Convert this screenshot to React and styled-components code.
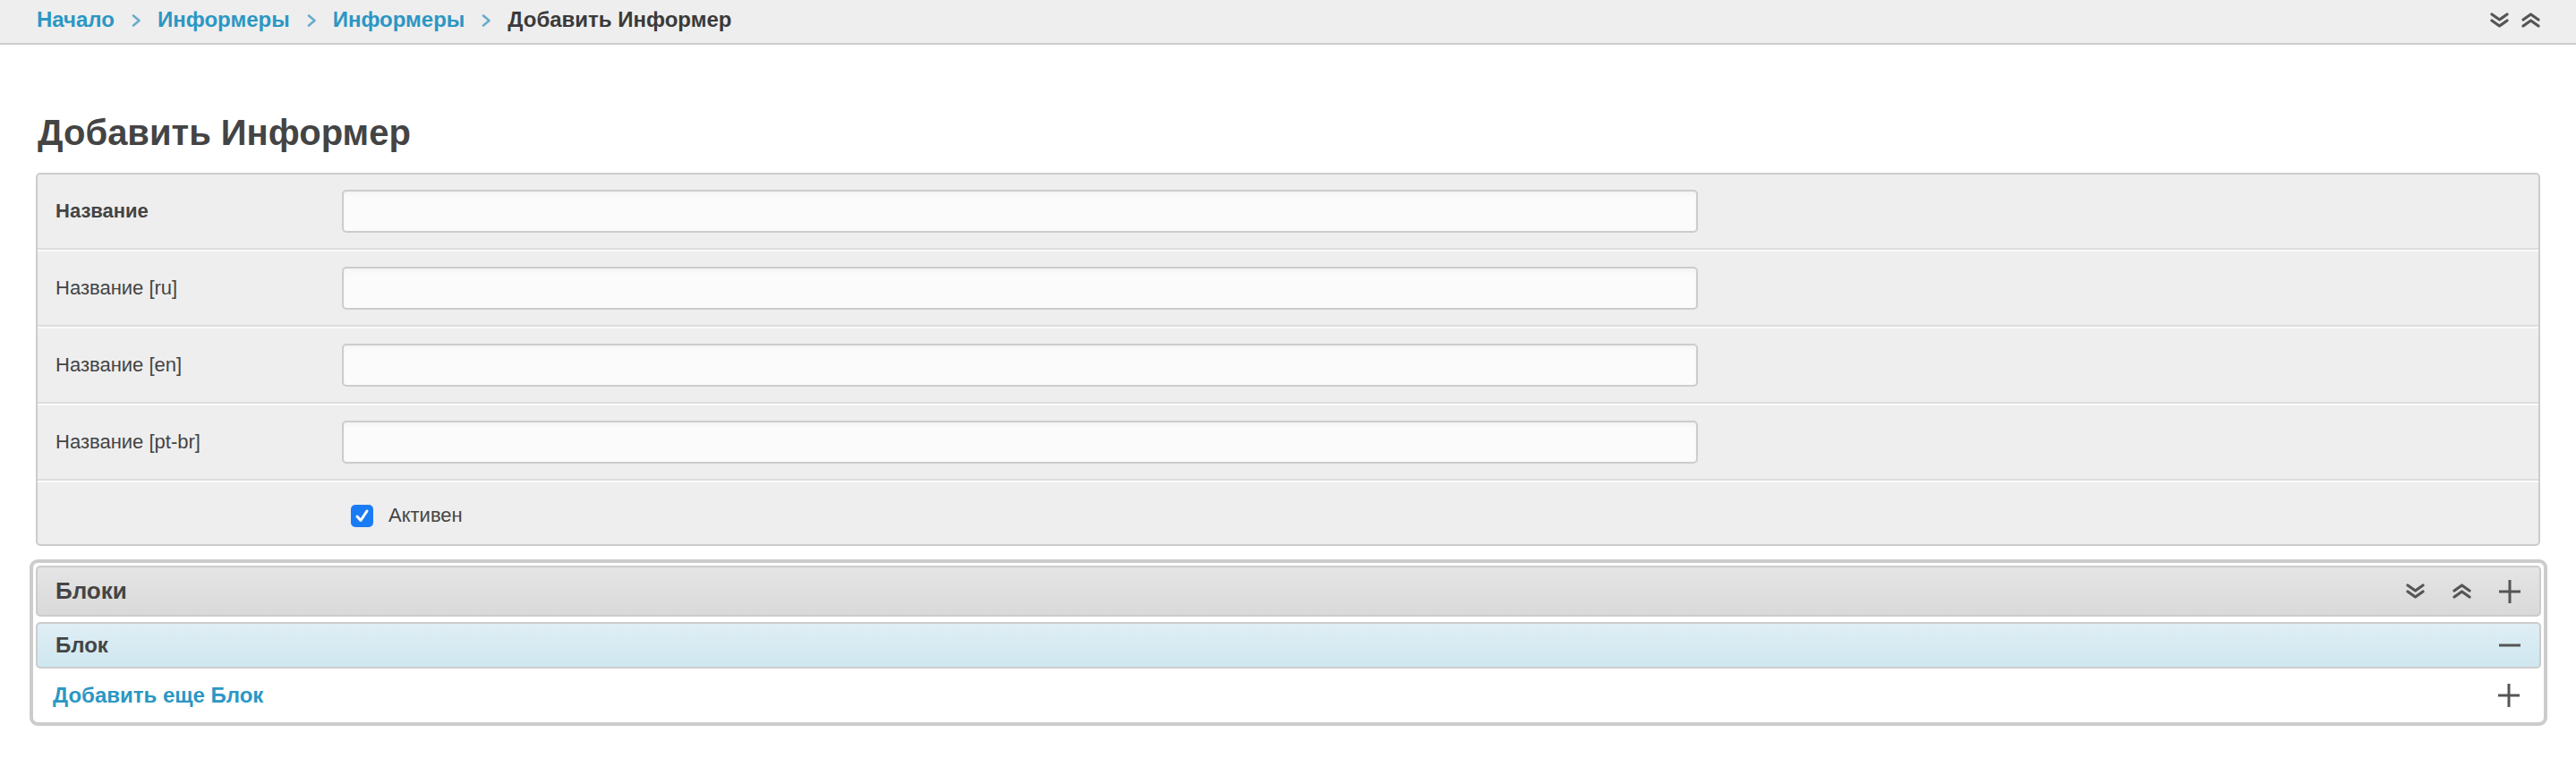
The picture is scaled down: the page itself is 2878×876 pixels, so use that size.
import React from "react";
import styled, { createGlobalStyle } from "styled-components";

const GlobalStyle = createGlobalStyle`
  body {
    margin: 0;
    background: #fff;
    font-family: "Liberation Sans", Arial, sans-serif;
    color: #444;
  }
  * { box-sizing: border-box; }
`;

const Breadcrumbs = styled.div`
  height: 50px;
  background: #eeeeee;
  border-bottom: 2px solid #cccccc;
  display: flex;
  align-items: center;
  padding: 0 40px 4px 41px;
  font-size: 24px;
  font-weight: bold;
`;

const Crumb = styled.a`
  color: ${({ current }) => (current ? "#3a3a3a" : "#2b97c4")};
  text-decoration: none;
`;

const Sep = styled.span`
  display: inline-flex;
  margin: 2px 18px 0 19px;
`;

const Tools = styled.div`
  margin-left: auto;
  display: flex;
  gap: 14px;
  margin-top: 0;
`;

const Content = styled.div`
  padding: 0 40px;
`;

const Title = styled.h1`
  margin: 74px 0 21px 2px;
  font-size: 40px;
  line-height: 48px;
  font-weight: bold;
  color: #444;
`;

const Panel = styled.div`
  background: #eeeeee;
  border: 2px solid #cccccc;
  border-radius: 5px;
  overflow: hidden;
`;

const Row = styled.div`
  display: flex;
  align-items: center;
  padding: ${({ last }) => (last ? "24px 20px 19px" : "17px 20px")};
  border-top: ${({ first }) => (first ? "none" : "2px solid #fafafa")};
  border-bottom: ${({ last }) => (last ? "none" : "2px solid #dddddd")};
`;

const Label = styled.label`
  width: 320px;
  flex-shrink: 0;
  font-size: 22px;
  font-weight: ${({ required }) => (required ? "bold" : "normal")};
  color: #444;
`;

const Input = styled.input`
  width: 1515px;
  height: 48px;
  border: 2px solid #cccccc;
  border-radius: 5px;
  background: #fbfbfb;
  box-shadow: inset 0 3px 4px rgba(0, 0, 0, 0.03);
  font-size: 22px;
  padding: 0 12px;
  font-family: inherit;
`;

const CheckWrap = styled.label`
  display: flex;
  align-items: center;
  gap: 17px;
  margin-left: 330px;
  font-size: 22px;
  color: #444;
`;

const CheckBox = styled.span`
  width: 25px;
  height: 25px;
  border-radius: 5px;
  background: #1a7cf5;
  display: inline-flex;
  align-items: center;
  justify-content: center;
`;

const Group = styled.div`
  margin: 15px -8px 0 -7px;
  border: 4px solid #cccccc;
  border-radius: 9px;
  padding: 3px;
`;

const GroupHeader = styled.div`
  height: 57px;
  display: flex;
  align-items: center;
  padding: 0 21px 0 20px;
  border: 2px solid #cccccc;
  border-radius: 5px;
  background: linear-gradient(#e5e5e5, #d9d9d9);
  font-size: 26px;
  font-weight: bold;
  color: #444;
  margin-bottom: 6px;
`;

const ItemHeader = styled(GroupHeader)`
  height: 52px;
  background: linear-gradient(#dfeef4, #cfe7f0);
  font-size: 24px;
  margin-bottom: 0;
`;

const AddRow = styled.div`
  height: 57px;
  display: flex;
  align-items: center;
  padding: 2px 24px 0 19px;
`;

const AddLink = styled.a`
  color: #2b97c4;
  font-weight: bold;
  font-size: 24px;
  text-decoration: none;
`;

const Actions = styled.div`
  margin-left: auto;
  display: flex;
  align-items: center;
  gap: 31px;
`;

const DoubleChevron = ({ up, w = 21, h = 17 }) => (
  <svg width={w} height={h} viewBox="0 0 21 17" fill="none" stroke="#555" strokeWidth="3.2" strokeLinecap="round" strokeLinejoin="round">
    {up ? (
      <>
        <polyline points="2,8 10.5,2 19,8" />
        <polyline points="2,15 10.5,9 19,15" />
      </>
    ) : (
      <>
        <polyline points="2,2 10.5,8 19,2" />
        <polyline points="2,9 10.5,15 19,9" />
      </>
    )}
  </svg>
);

const Plus = () => (
  <svg width="24" height="26" viewBox="0 0 24 26" stroke="#555" strokeWidth="3">
    <line x1="0" y1="13" x2="24" y2="13" />
    <line x1="12" y1="0" x2="12" y2="26" />
  </svg>
);

const Minus = () => (
  <svg width="24" height="26" viewBox="0 0 24 26" stroke="#555" strokeWidth="3">
    <line x1="0" y1="13" x2="24" y2="13" />
  </svg>
);

const Chevron = () => (
  <svg width="11" height="14" viewBox="0 0 11 14" fill="none" stroke="#6aaccb" strokeWidth="2.6" strokeLinecap="round" strokeLinejoin="round">
    <polyline points="2,1.5 8.5,7 2,12.5" />
  </svg>
);

const fields = [
  { label: "Название", required: true },
  { label: "Название [ru]" },
  { label: "Название [en]" },
  { label: "Название [pt-br]" },
];

const App = () => {
  return (
    <>
      <GlobalStyle />
      <Breadcrumbs>
        <Crumb href="#">Начало</Crumb>
        <Sep><Chevron /></Sep>
        <Crumb href="#">Информеры</Crumb>
        <Sep><Chevron /></Sep>
        <Crumb href="#">Информеры</Crumb>
        <Sep><Chevron /></Sep>
        <Crumb current>Добавить Информер</Crumb>
        <Tools>
          <DoubleChevron w={21} h={19} />
          <DoubleChevron up w={21} h={19} />
        </Tools>
      </Breadcrumbs>
      <Content>
        <Title>Добавить Информер</Title>
        <Panel>
          {fields.map((f, i) => (
            <Row key={f.label} first={i === 0}>
              <Label required={f.required}>{f.label}</Label>
              <Input type="text" />
            </Row>
          ))}
          <Row last>
            <CheckWrap>
              <CheckBox>
                <svg width="17" height="17" viewBox="0 0 17 17" fill="none" stroke="#fff" strokeWidth="3" strokeLinecap="round" strokeLinejoin="round">
                  <polyline points="3,9 7,13.5 14,3" />
                </svg>
              </CheckBox>
              Активен
            </CheckWrap>
          </Row>
        </Panel>
        <Group>
          <GroupHeader>
            Блоки
            <Actions>
              <DoubleChevron />
              <DoubleChevron up />
              <Plus />
            </Actions>
          </GroupHeader>
          <ItemHeader>
            Блок
            <Actions>
              <Minus />
            </Actions>
          </ItemHeader>
          <AddRow>
            <AddLink href="#">Добавить еще Блок</AddLink>
            <Actions>
              <Plus />
            </Actions>
          </AddRow>
        </Group>
      </Content>
    </>
  );
};

export default App;
